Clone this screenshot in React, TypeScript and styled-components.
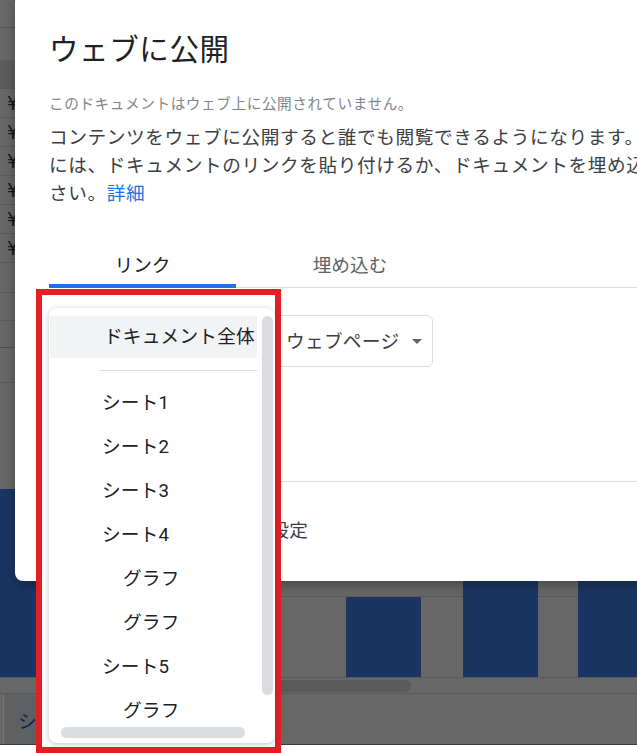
import React from "react";
import styled, { createGlobalStyle } from "styled-components";

const GlobalStyle = createGlobalStyle`
  html, body { margin: 0; padding: 0; }
  body {
    width: 637px;
    height: 753px;
    overflow: hidden;
    font-family: Roboto, "Noto Sans CJK JP", sans-serif;
    background: #fff;
  }
`;

const Page = styled.div`
  position: relative;
  width: 637px;
  height: 753px;
  overflow: hidden;
  display: flex;
  flex-direction: column;
  background: #fff;
`;

/* ---------- dimmed spreadsheet behind the dialog ---------- */

const Sheet = styled.div`
  display: flex;
  flex-direction: column;
  background: #676767;
`;

const SheetRow = styled.div<{ $h: number; $tone?: string; $line?: string }>`
  height: ${(p) => p.$h}px;
  box-sizing: border-box;
  background: ${(p) => p.$tone || "#676767"};
  border-bottom: 1px solid ${(p) => p.$line || "#5a5a5a"};
  display: flex;
  align-items: center;
  padding-left: 7px;
  font-family: "DejaVu Sans", "Noto Sans CJK JP", sans-serif;
  font-size: 19px;
  color: #161616;
`;

const Chart = styled.div`
  height: 188px;
  display: flex;
  align-items: flex-end;
  background: linear-gradient(
      to bottom,
      transparent 107px,
      #5a5a5a 107px,
      #5a5a5a 108px,
      transparent 108px
    ),
    #676767;
`;

const Bar = styled.div`
  flex: none;
  background: #1b3562;
  border-radius: 1px 1px 0 0;
`;

const ScrollStrip = styled.div`
  height: 17px;
  box-sizing: border-box;
  border-top: 1px solid #585858;
  border-bottom: 1px solid #585858;
  display: flex;
  align-items: center;
  padding-left: 40px;
`;

const ScrollThumb = styled.div`
  width: 371px;
  height: 12px;
  border-radius: 6px;
  background: #5a5a5a;
`;

const TabStrip = styled.div`
  height: 51px;
  box-sizing: border-box;
  border-bottom: 1px solid #3a3a3a;
  display: flex;
  padding-left: 3px;
`;

const SheetTab = styled.div`
  border-left: 1px solid #757575;
  background: #5f6062;
  padding: 0 14px;
  display: flex;
  align-items: center;
  font-size: 18.67px;
  color: #0f2452;
  white-space: nowrap;
`;

/* ---------- dialog ---------- */

const Dialog = styled.div`
  position: absolute;
  left: 15px;
  top: -6px;
  width: 740px;
  height: 587px;
  box-sizing: border-box;
  background: #fff;
  border-radius: 8px;
  box-shadow: 0 4px 12px rgba(0, 0, 0, 0.3);
  padding: 38px 0 0 34px;
  display: flex;
  flex-direction: column;
  overflow: hidden;
`;

const Title = styled.h1`
  margin: 0;
  font-size: 29.5px;
  line-height: 36px;
  font-weight: 400;
  letter-spacing: 0.6px;
  color: #202124;
`;

const Subtitle = styled.div`
  margin-top: 26px;
  font-size: 14.67px;
  line-height: 20px;
  letter-spacing: 0.55px;
  color: #80868b;
`;

const Body = styled.div`
  margin-top: 10px;
  font-size: 18.67px;
  line-height: 28px;
  letter-spacing: 0.6px;
  color: #3c4043;
`;

const Line = styled.span`
  display: block;
  white-space: nowrap;
`;

const Link = styled.a`
  color: #1a73e8;
  text-decoration: none;
`;

const TabBar = styled.div`
  margin-top: 39px;
  display: flex;
  border-bottom: 1px solid #dadce0;
`;

const Tab = styled.div<{ $w: number; $active?: boolean }>`
  width: ${(p) => p.$w}px;
  height: 41px;
  box-sizing: border-box;
  margin-bottom: -1px;
  padding-bottom: 5px;
  border-bottom: 4px solid ${(p) => (p.$active ? "#1a73e8" : "transparent")};
  display: flex;
  align-items: center;
  justify-content: center;
  font-size: 18.67px;
  color: ${(p) => (p.$active ? "#202124" : "#5f6368")};
`;

const SelectRow = styled.div`
  margin-top: 27px;
  display: flex;
  gap: 13px;
`;

const SelectBox = styled.div<{ $w: number }>`
  width: ${(p) => p.$w}px;
  height: 52px;
  box-sizing: border-box;
  border: 1px solid #dadce0;
  border-radius: 6px;
  display: flex;
  align-items: center;
  padding: 0 10px 3px 23px;
  font-size: 18.67px;
  letter-spacing: 0.3px;
  color: #3c4043;
  white-space: nowrap;
`;

const Caret = styled.span`
  margin-left: auto;
  margin-top: 3px;
  width: 0;
  height: 0;
  border-left: 5px solid transparent;
  border-right: 5px solid transparent;
  border-top: 5px solid #5f6368;
`;

const PublishButton = styled.div`
  margin-top: 26px;
  align-self: flex-start;
  height: 40px;
  padding: 0 24px;
  border-radius: 4px;
  background: #1a73e8;
  color: #fff;
  display: flex;
  align-items: center;
  font-size: 18.67px;
`;

const Divider = styled.div`
  margin-top: 48px;
  height: 1px;
  background: #dadce0;
`;

const SettingsRow = styled.div`
  padding-top: 35px;
  display: flex;
  align-items: center;
  gap: 11px;
  font-size: 18.67px;
  line-height: 28px;
  color: #3c4043;
`;

const Expander = styled.span`
  width: 24px;
  height: 24px;
  display: flex;
  align-items: center;
  justify-content: center;
  &::before {
    content: "";
    border-top: 5px solid transparent;
    border-bottom: 5px solid transparent;
    border-left: 6px solid #5f6368;
  }
`;

/* ---------- annotated dropdown menu ---------- */

const RedFrame = styled.div`
  position: absolute;
  left: 36px;
  top: 289px;
  width: 245px;
  height: 464px;
  box-sizing: border-box;
  border: 6px solid #e41e25;
  background: #fff;
`;

const Menu = styled.div`
  position: absolute;
  left: 7px;
  top: 13px;
  width: 226px;
  height: 435px;
  box-sizing: border-box;
  padding-top: 8px;
  background: #fff;
  border-radius: 8px;
  box-shadow: 0 1px 4px rgba(60, 64, 67, 0.2), 0 2px 8px rgba(60, 64, 67, 0.12);
  overflow: hidden;
`;

const MenuItem = styled.div<{ $indent: number; $h: number; $selected?: boolean }>`
  width: 207px;
  margin-left: 1px;
  height: ${(p) => p.$h}px;
  box-sizing: border-box;
  padding-left: ${(p) => p.$indent}px;
  padding-bottom: 5px;
  display: flex;
  align-items: center;
  background: ${(p) => (p.$selected ? "#f1f3f4" : "transparent")};
  font-size: 18.67px;
  letter-spacing: 0.2px;
  color: #202124;
  white-space: nowrap;
  overflow: hidden;
`;

const MenuSeparator = styled.div`
  margin: 12px 0 10px 51px;
  width: 157px;
  height: 1px;
  background: #dadce0;
`;

const VScroll = styled.div`
  position: absolute;
  left: 213px;
  top: 8px;
  width: 11px;
  height: 379px;
  border-radius: 6px;
  background: #dadce0;
`;

const HScroll = styled.div`
  position: absolute;
  left: 12px;
  top: 419px;
  width: 184px;
  height: 11px;
  border-radius: 6px;
  background: #dadce0;
`;

const topRows = [
  { h: 28, tone: "#686868", line: "#565656" },
  { h: 32, tone: "#676767", line: "#676767" },
  { h: 29, tone: "#5c5c5c", line: "#585858" },
  { h: 29, text: "¥" },
  { h: 29, text: "¥" },
  { h: 29, text: "¥" },
  { h: 29, text: "¥" },
  { h: 29, text: "¥" },
  { h: 29, text: "¥" },
  { h: 30 },
  { h: 28 },
  { h: 27, line: "#4f4f4f" },
  { h: 35 },
  { h: 106, line: "#676767" },
];

const bars = [
  { ml: 0, w: 230, h: 188 },
  { ml: 116, w: 75, h: 80 },
  { ml: 42, w: 75, h: 150 },
  { ml: 40, w: 80, h: 150 },
];

const menuItems = [
  { label: "シート1", indent: 52 },
  { label: "シート2", indent: 52 },
  { label: "シート3", indent: 52 },
  { label: "シート4", indent: 52 },
  { label: "グラフ", indent: 73 },
  { label: "グラフ", indent: 73 },
  { label: "シート5", indent: 52 },
  { label: "グラフ", indent: 73 },
];

export default function App() {
  return (
    <>
      <GlobalStyle />
      <Page>
        <Sheet>
          {topRows.map((r, i) => (
            <SheetRow key={i} $h={r.h} $tone={r.tone} $line={r.line}>
              {r.text}
            </SheetRow>
          ))}
          <Chart>
            {bars.map((b, i) => (
              <Bar key={i} style={{ marginLeft: b.ml, width: b.w, height: b.h }} />
            ))}
          </Chart>
          <ScrollStrip>
            <ScrollThumb />
          </ScrollStrip>
          <TabStrip>
            <SheetTab>シート1</SheetTab>
          </TabStrip>
        </Sheet>

        <Dialog>
          <Title>ウェブに公開</Title>
          <Subtitle>このドキュメントはウェブ上に公開されていません。</Subtitle>
          <Body>
            <Line>コンテンツをウェブに公開すると誰でも閲覧できるようになります。共有する</Line>
            <Line>には、ドキュメントのリンクを貼り付けるか、ドキュメントを埋め込んでくだ</Line>
            <Line>
              さい。<Link href="#">詳細</Link>
            </Line>
          </Body>
          <TabBar>
            <Tab $w={187} $active>
              リンク
            </Tab>
            <Tab $w={228}>埋め込む</Tab>
          </TabBar>
          <SelectRow>
            <SelectBox $w={200}>ドキュメント全体</SelectBox>
            <SelectBox $w={171}>
              ウェブページ
              <Caret />
            </SelectBox>
          </SelectRow>
          <PublishButton>公開</PublishButton>
          <Divider />
          <SettingsRow>
            <Expander />
            公開するコンテンツと設定
          </SettingsRow>
        </Dialog>

        <RedFrame>
          <Menu>
            <MenuItem $indent={54} $h={42} $selected>
              ドキュメント全体
            </MenuItem>
            <MenuSeparator />
            {menuItems.map((m, i) => (
              <MenuItem key={i} $indent={m.indent} $h={44}>
                {m.label}
              </MenuItem>
            ))}
            <VScroll />
            <HScroll />
          </Menu>
        </RedFrame>
      </Page>
    </>
  );
}
